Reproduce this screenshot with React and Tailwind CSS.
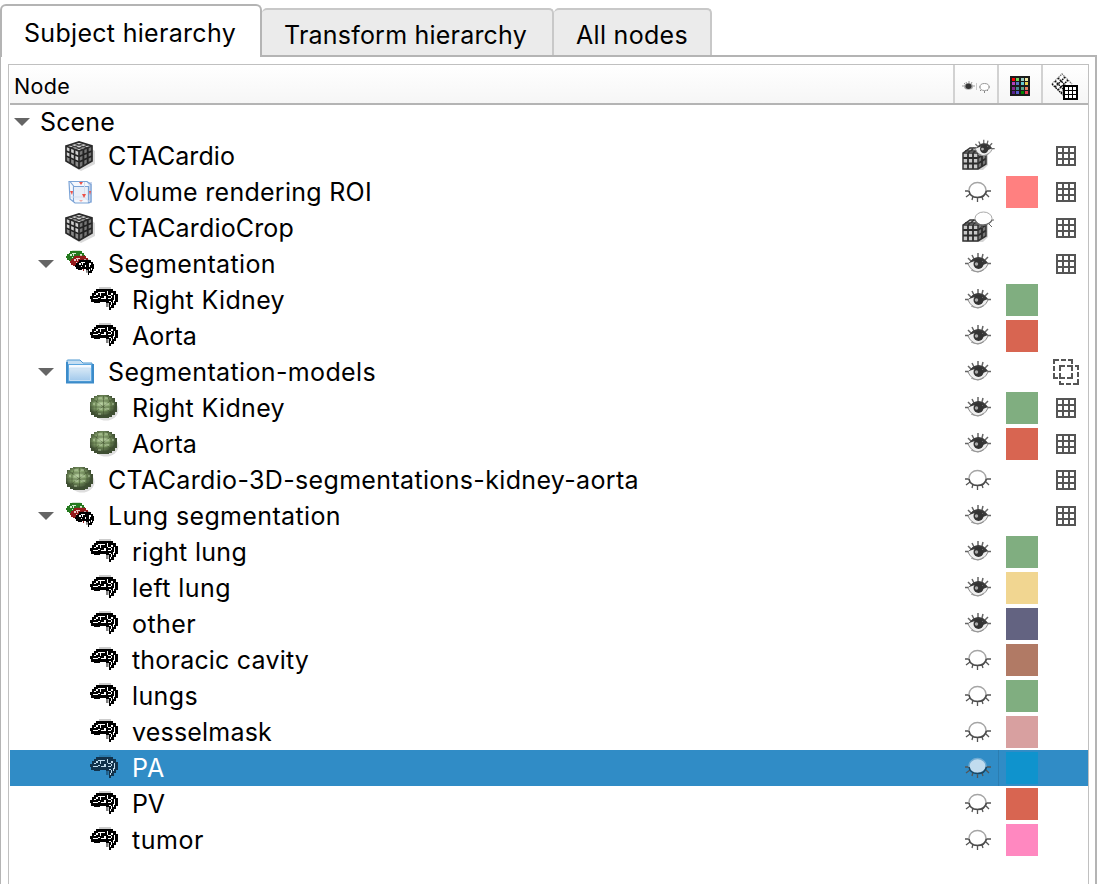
import React from "react";

function Cube() {
  return (
    <svg className="h-[32px] w-[32px]" viewBox="0 0 32 32" fill="none">
      <path d="M8 26 17 31 31 24V11L28 9Z" fill="#dadada" />
      <path d="M2 6 15 2 28 6 15 11Z" fill="#d6d6d6" />
      <path d="M2 6 15 11V28L2 21Z" fill="#cfcfcf" />
      <path d="M2 17 15 23V28L2 21Z" fill="#8a8a8a" />
      <path d="M28 6 15 11V28L28 21Z" fill="#777" />
      <path d="M6 5 19 9.500M10.500 3.500 23.500 8M24 5 11 9.500M19.500 3.500 6.500 8" stroke="#3a3a3a" strokeWidth="1.300" />
      <path d="M6.300 8v15.500M10.600 9.500v16.500M2 11l13 5.500M2 16l13 6" stroke="#222" strokeWidth="1.700" />
      <path d="M19.400 9.500V26M23.700 8v15.500M28 11l-13 5.500M28 16l-13 6" stroke="#222" strokeWidth="1.900" />
      <path d="M2 6 15 2 28 6V21L15 28.500 2 21ZM2 6l13 5 13-5M15 11v17" stroke="#2a2a2a" strokeWidth="1.700" />
    </svg>
  );
}

function Roi() {
  return (
    <svg className="h-[28px] w-[28px]" viewBox="0 0 28 28" fill="none">
      <path d="M4 3h17l5 4v18H9l-5-5z" fill="#f5f8fd" />
      <path d="M9 8h14v14H9z" fill="#e8eef8" />
      <path d="M21 4h5v21h-3V8z" fill="#c9d6ed" />
      <path d="M3 3.500h18l4 3v17l-2 1.500H9l-5-4zM7.500 8.500h15v16M7.500 8.500v15M4 3.500l4 5" stroke="#7ba3d6" strokeWidth="1.200" />
      <path d="M18.500 4v15H5M18.500 19l5 5" stroke="#d5deee" />
      <path d="M13 4h4l-2 3zM4 13h3l-1 4zM16 16h4l-2 4zM23 13h2l-1 4z" fill="#ed5148" />
      <path d="M13 22h4l-2 2z" fill="#f0aaa6" />
    </svg>
  );
}

function BrainShape({ fill = "#000", line = "#fff" }) {
  return (
    <g>
      <path d="M9 0h12v2H9z" fill={fill} opacity=".2" />
      <path d="M6 2h17v2h3v3h2v8h-2v3h-2v3h-3v2h-2v-7h-3v-1h-6v1H4v-1H1v-3H0V9h2V6h2V4h2z" fill={fill} shapeRendering="crispEdges" />
      <path d="M16 16h2.500v4H16z" fill={fill} opacity=".5" />
      <g shapeRendering="crispEdges" fill={line}>
        <path d="M8 5h7v1H8zM6 6h2v2H6zM4 8h2v1H4zM3 11h5v1H3zM8 10h2v1H8zM10 6h1v3h-1zM11 11h5v1h-5zM14 9h2v2h-2z" />
        <path d="M17 4h1v4h-1zM18 8h3v1h-3zM21 6h2v2h-2zM18 11h3v1h-3zM21 9h1v2h-1zM24 8h1v6h-1zM23 13h1v3h-1zM19 14h2v1h-2zM21 15h1v3h-1zM20 18h1v2h-1z" />
      </g>
    </g>
  );
}

function Brain({ selected }) {
  return (
    <svg className="mb-[2px] h-[24px] w-[28px]" viewBox="0 0 28 24">
      <BrainShape fill={selected ? "#12324b" : "#000"} line={selected ? "#bfdbed" : "#fff"} />
    </svg>
  );
}

function Segmentation() {
  return (
    <svg className="mb-[2px] h-[26px] w-[29px]" viewBox="0 0 29 26">
      <g transform="translate(0 0) scale(.69)"><BrainShape fill="#247a1e" line="#d5ead2" /></g>
      <g transform="translate(4 5) scale(.69)"><BrainShape fill="#951a1b" line="#eec9c9" /></g>
      <g transform="translate(9 9) scale(.69)"><BrainShape /></g>
    </svg>
  );
}

function Folder() {
  return (
    <svg className="mb-[2px] h-[25px] w-[28px]" viewBox="0 0 28 25">
      <defs>
        <linearGradient id="folder" x2="0" y2="1">
          <stop stopColor="#d7e8f6" /><stop offset="1" stopColor="#a3caec" />
        </linearGradient>
      </defs>
      <path d="M1 23V1.500Q1 1 2 1h12l3 3h9v3" fill="#c4def3" stroke="#4f98d1" />
      <path d="M1 5h26v19H1z" fill="#5ba6df" />
      <path d="M3 6h22v3H3z" fill="#f6faff" />
      <path d="M3.500 9h21v12.500h-21z" fill="url(#folder)" stroke="#c8e0f4" />
      <path d="M1 3v20.500h26V5" fill="none" stroke="#3c8bc9" strokeWidth="2" />
    </svg>
  );
}

function Sphere() {
  return (
    <svg className="h-[26px] w-[30px]" viewBox="0 0 30 26">
      <defs>
        <radialGradient id="sphere" cx=".45" cy=".4">
          <stop stopColor="#b3cb9b" /><stop offset=".6" stopColor="#7f9b66" /><stop offset="1" stopColor="#3f4f33" />
        </radialGradient>
      </defs>
      <ellipse cx="17" cy="15" rx="12.500" ry="10.500" fill="#dedede" />
      <path d="M8 0h12v1h3v2h3v4h2v10h-2v3h-3v2h-3v1H8v-1H5v-2H2v-3H1V7h1V3h3V1h3z" fill="url(#sphere)" />
      <path d="M10 1 7 8v8l4 6M18 1l4 7v8l-4 6M14.500 1v21M3 6h23M1 12h26M3 17h23M4 4l20 15M24 4 4 19" stroke="#3d4d2c" strokeOpacity=".5" fill="none" />
      <path d="M9 3h4M16 3h3M4 9h2M9 9h4M16 9h4M23 9h2M10 14h3M16 14h4M9 19h3" stroke="#c9dcb6" strokeOpacity=".8" fill="none" />
    </svg>
  );
}

function EyeShape({ open, selected }) {
  if (open)
    return (
      <g fill="none">
        <path d="M1 11.500h4M4 6l3 3M8 3l2 4M14 1v5M19 2l-1 4M24 5l-3 3M23 11.500h4" stroke="#666" strokeWidth="1.500" />
        <path d="M4 12Q8 6 14 6t10 6Q21 19 14 20 7 19 4 12Z" fill="#eee" stroke="#888" />
        <path d="M5 11Q9 5 14.500 5T24 11l-5 2V9h-8z" fill="#3a3a3a" />
        <circle cx="14.500" cy="12" r="5" fill="#333" />
        <circle cx="12.500" cy="12" r="1.700" fill="#aaa" />
        <path d="M7 18q7 4 13-1" stroke="#999" />
      </g>
    );
  return (
    <g fill="none">
      <path d="M1 11h5M22 11h5M6 14l-4 3M9 16l-1 4M13.500 18v4M18 17l1 3M22 14l3 3" stroke="#555" strokeWidth="1.300" />
      <ellipse cx="13.500" cy="10" rx="8.500" ry="7.500" fill={selected ? "#c1dcef" : "#fff"} stroke={selected ? "#6faad2" : "#a5a5a5"} strokeWidth="1.400" />
      <path d="M5 11q1 6.500 8.500 6.500t9-6.500" stroke={selected ? "#174664" : "#4a4a4a"} strokeWidth="1.600" />
    </g>
  );
}

function Eye(props) {
  return <svg className="mb-[1px] h-[24px] w-[28px]" viewBox="0 0 28 24"><EyeShape {...props} /></svg>;
}

function VolumeEye({ open }) {
  return (
    <svg className="h-[34px] w-[34px]" viewBox="0 0 34 34" fill="none">
      <path d="M5 31h17l5-5V12H10z" fill="#d5d5d5" />
      <path d="M2 14 9 9h16l-8 5z" fill="#d0d0d0" />
      <path d="M2 14h15v16H2z" fill="#c8c8c8" />
      <path d="m17 14 8-5v16l-8 5z" fill="#777" />
      <path d="M4 12h17M7 14l6-5M12 14l7-5" stroke="#333" strokeWidth="1.300" />
      <path d="M2 19h15M2 24.500h15M7 14v16M12 14v16M17 19l8-5M17 24.500l8-5M21 11.500v16" stroke="#2c2c2c" strokeWidth="1.800" />
      <path d="M2 14 9 9h16v16l-8 5H2zM2 14h15l8-5M17 14v16" stroke="#333" strokeWidth="1.500" />
      {open ? (
        <g transform="translate(11 0) scale(.84)"><EyeShape open /></g>
      ) : (
        <g>
          <path d="m27 12 4 4M30 9h3M21 14v3M16 12l-3 2" stroke="#666" />
          <ellipse cx="22.500" cy="7.500" rx="8.500" ry="6.500" fill="#fff" stroke="#aaa" />
          <path d="M14 9q3 6 9 5t8-5" stroke="#666" strokeWidth="1.300" />
        </g>
      )}
    </svg>
  );
}

function Grid() {
  return (
    <svg className="h-[20px] w-[20px]" viewBox="0 0 20 20" shapeRendering="crispEdges">
      <path d="M1 1h18v18H1zM7 1v18M13 1v18M1 7h18M1 13h18" fill="none" stroke="#555" strokeWidth="2" />
    </svg>
  );
}

function FolderTransform() {
  return (
    <svg className="h-[26px] w-[26px]" viewBox="0 0 26 26" shapeRendering="crispEdges" fill="none" stroke="#555" strokeWidth="2">
      <path d="M0 1h6M8 1h5M15 1h5M1 0v5M1 7v5M1 14v6M0 19h5M19 0v5" />
      <path d="M6 7h6M14 7h6M7 6v6M7 14v6M19 6v6M19 14v6M6 19h6M14 19h6M22 7h4M25 6v5M25 13v5M25 20v6M20 25h6M13 25h5M6 25h5M7 22v4" />
    </svg>
  );
}

function VisibilityHeader() {
  return (
    <svg className="h-[14px] w-[28px]" viewBox="0 0 28 14" fill="none">
      <path d="m2 3 2 2M4 2l1 2M7 1v3M10 2 9 4M0 6h3M10 6h3" stroke="#999" />
      <ellipse cx="6.500" cy="6.500" rx="4.500" ry="3.200" fill="#aaa" />
      <ellipse cx="6.500" cy="6.300" rx="3" ry="2.700" fill="#333" />
      <path d="M14.500 3v7" stroke="#ccc" />
      <path d="M17 7h2M26 7h2M19 10l-1 1M25 10l1 1M22.500 11v2" stroke="#888" />
      <ellipse cx="22.500" cy="7" rx="4.500" ry="3.500" fill="#fff" stroke="#999" />
    </svg>
  );
}

const palette = [
  "#ff0000", "#75d35a", "#99cfc5", "#f0eba6",
  "#b640bd", "#5878c4", "#64cbd2", "#e9d052",
  "#87278e", "#438b91", "#5aa78d", "#e77c60",
  "#57208e", "#555dcc", "#008500", "#e83a57",
];

function ColorHeader() {
  return (
    <svg className="h-[20px] w-[20px]" viewBox="0 0 20 20" shapeRendering="crispEdges">
      <path fill="#1b1b1b" d="M0 0h20v20H0z" />
      {palette.map((c, i) => {
        const pos = [2, 6, 11, 15];
        return <rect key={i} x={pos[i % 4]} y={[2, 6, 11, 15][Math.floor(i / 4)]} width="3" height="3" fill={c} />;
      })}
    </svg>
  );
}

function TransformHeader() {
  return (
    <svg className="mr-[2px] h-[28px] w-[28px]" viewBox="0 0 28 28" fill="none">
      <path d="m1 11 10-10 10 10-10 10z" fill="#fff" />
      <path d="m1 11 5-5 5-5 5 5 5 5" stroke="#777" strokeWidth="1.300" strokeDasharray="1.500 .8" />
      <path d="m1 11 11 11M4 8l11 11M7 5l10 10M4 14 14 4M7 17 17 7M10 20l5-5" stroke="#111" strokeWidth="1.400" strokeDasharray="1.800 .7" />
      <g shapeRendering="crispEdges">
        <path d="M13 13h13v13H13z" fill="#fff" stroke="#000" strokeWidth="2" />
        <path d="M17.500 13v14M21.500 13v14M12 17.500h14M12 21.500h14" stroke="#000" />
      </g>
    </svg>
  );
}

const icons = { cube: Cube, roi: Roi, brain: Brain, seg: Segmentation, folder: Folder, sphere: Sphere };

const G = "bg-[#80ae80]";
const R = "bg-[#d86551]";
const rows = [
  { name: "CTACardio", w: 125, icon: "cube", vis: "vol", transform: "grid" },
  { name: "Volume rendering ROI", w: 262, icon: "roi", vis: "closed", color: "bg-[#ff8080]", transform: "grid" },
  { name: "CTACardioCrop", w: 184, icon: "cube", vis: "volClosed", transform: "grid" },
  { name: "Segmentation", w: 166, icon: "seg", vis: "open", transform: "grid", arrow: true },
  { name: "Right Kidney", w: 151, icon: "brain", vis: "open", color: G, child: true },
  { name: "Aorta", w: 63, icon: "brain", vis: "open", color: R, child: true },
  { name: "Segmentation-models", w: 266, icon: "folder", vis: "open", transform: "folder", arrow: true },
  { name: "Right Kidney", w: 151, icon: "sphere", vis: "open", color: G, transform: "grid", child: true },
  { name: "Aorta", w: 63, icon: "sphere", vis: "open", color: R, transform: "grid", child: true },
  { name: "CTACardio-3D-segmentations-kidney-aorta", w: 529, icon: "sphere", vis: "closed", transform: "grid" },
  { name: "Lung segmentation", w: 231, icon: "seg", vis: "open", transform: "grid", arrow: true },
  { name: "right lung", w: 113, icon: "brain", vis: "open", color: G, child: true },
  { name: "left lung", w: 97, icon: "brain", vis: "open", color: "bg-[#f1d691]", child: true },
  { name: "other", w: 62, icon: "brain", vis: "open", color: "bg-[#636381]", child: true },
  { name: "thoracic cavity", w: 175, icon: "brain", vis: "closed", color: "bg-[#b17a65]", child: true },
  { name: "lungs", w: 64, icon: "brain", vis: "closed", color: G, child: true },
  { name: "vesselmask", w: 138, icon: "brain", vis: "closed", color: "bg-[#d8a0a0]", child: true },
  { name: "PA", w: 31, icon: "brain", vis: "closed", color: "bg-[#0f93cd]", child: true, selected: true },
  { name: "PV", w: 31, icon: "brain", vis: "closed", color: R, child: true },
  { name: "tumor", w: 70, icon: "brain", vis: "closed", color: "bg-[#ff88c0]", child: true },
];

/* Label whose letter spacing is adjusted so that the text spans a set width. */
function Label({ text, width, className = "" }) {
  const ref = React.useRef(null);
  const [spacing, setSpacing] = React.useState(0);
  React.useLayoutEffect(() => {
    const natural = ref.current.getBoundingClientRect().width;
    setSpacing((width + 2 - natural) / text.length);
  }, [text, width]);
  return (
    <span ref={ref} className={`inline-block whitespace-pre ${className}`} style={{ letterSpacing: `${spacing}px` }}>
      {text}
    </span>
  );
}

function Arrow() {
  return (
    <svg className="h-[8px] w-[16px]" viewBox="0 0 16 8"><path d="M0 0h16L8 8z" fill="#656565" /></svg>
  );
}

function Row({ row }) {
  const Icon = icons[row.icon];
  return (
    <div className={`flex h-[36px] items-center ${row.selected ? "bg-[#308cc6] text-white" : ""}`}>
      <div className={`flex h-full w-[943px] items-center ${row.child ? "pl-[76px]" : "pl-[28px]"}`}>
        {!row.child && <div className="flex w-[24px] shrink-0">{row.arrow && <Arrow />}</div>}
        <div className="flex w-[36px] shrink-0 items-center justify-center"><Icon selected={row.selected} /></div>
        <Label text={row.name} width={row.w} className="ml-[10px]" />
      </div>
      <div className={`flex h-full w-[46px] items-center justify-center pl-[4px] ${row.selected ? "border-r border-[#2b7db1]" : ""}`}>
        {row.vis === "vol" && <VolumeEye open />}
        {row.vis === "volClosed" && <VolumeEye />}
        {row.vis === "open" && <Eye open />}
        {row.vis === "closed" && <Eye selected={row.selected} />}
      </div>
      <div className="flex w-[46px] items-center justify-center">
        {row.color && <div className={`size-[32px] ${row.color}`} />}
      </div>
      <div className="flex w-[42px] items-center justify-center">
        {row.transform === "grid" && <Grid />}
        {row.transform === "folder" && <FolderTransform />}
      </div>
    </div>
  );
}

export default function App() {
  const head = "flex items-center justify-center border-r-2 border-[#d2d2d2]";
  return (
    <div className="flex h-[884px] w-[1102px] flex-col overflow-hidden bg-white pt-[4px] font-['Inter',sans-serif] text-[25px] leading-[30px] text-black">
      <div className="relative z-10 flex h-[53px] items-start">
        <div className="flex h-[53px] w-[262px] rounded-t-[6px] border-2 border-b-0 border-[#b4b4b4] bg-white pt-[12px] pl-[22px]">
          <Label text="Subject hierarchy" width={210} />
        </div>
        <div className="mt-[4px] flex h-[47px] w-[292px] rounded-t-[5px] border-2 border-b-0 border-l-0 border-[#c8c8c8] bg-[#ebebeb] pt-[10px] pl-[22px]">
          <Label text="Transform hierarchy" width={241} />
        </div>
        <div className="mt-[4px] flex h-[47px] w-[158px] rounded-t-[5px] border-2 border-b-0 border-l-0 border-[#c8c8c8] bg-[#ebebeb] pt-[10px] pl-[22px]">
          <Label text="All nodes" width={110} />
        </div>
      </div>
      <div className="-mt-[2px] h-[829px] w-[1097px] border-t-2 border-r-2 border-l border-[#b4b4b4] pt-[7px] pl-[7px]">
        <div className="h-[820px] w-[1081px] border-t border-r border-l border-[#c0c0c0] pl-px">
          <div className="flex h-[40px] w-[1078px] border-b-2 border-[#b4b4b4] bg-linear-to-b from-white to-[#f6f6f6] text-[21.500px]">
            <div className="flex w-[945px] items-center border-r-2 border-[#d2d2d2] pt-[4px] pl-[4px]"><Label text="Node" width={54} /></div>
            <div className={`${head} w-[44px] pt-[6px]`}><VisibilityHeader /></div>
            <div className={`${head} w-[44px] pt-[4px]`}><ColorHeader /></div>
            <div className="flex w-[45px] items-center justify-center pt-[6px]"><TransformHeader /></div>
          </div>
          <div className="flex h-[33px] items-center pl-[4px]">
            <Arrow />
            <Label text="Scene" width={73} className="ml-[10px]" />
          </div>
          <div className="w-[1078px]">
            {rows.map((row, i) => <Row key={i} row={row} />)}
          </div>
        </div>
      </div>
    </div>
  );
}
